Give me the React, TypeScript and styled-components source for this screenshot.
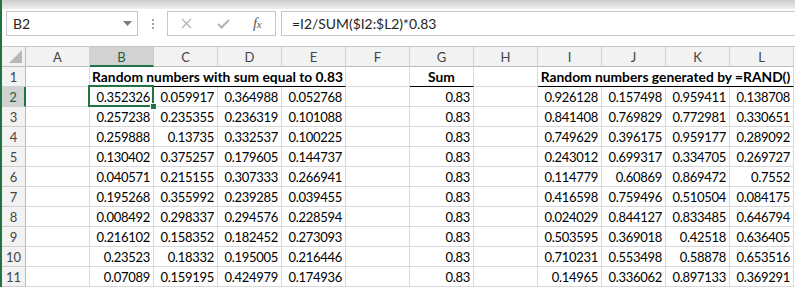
import React from 'react';
import styled, {createGlobalStyle} from 'styled-components';

const GlobalStyle = createGlobalStyle`
  html, body {
    margin: 0;
    padding: 0;
    background: #ffffff;
  }
  body {
    font-family: Lato, "Liberation Sans", sans-serif;
    overflow: hidden;
  }
`;

const GREEN = '#217346';

const Window = styled.div`
  display: flex;
  width: 795px;
  height: 287px;
  overflow: hidden;
  background: #ffffff;
`;
const Edge = styled.div`
  width: 2px;
  flex-shrink: 0;
  background: ${GREEN};
`;
const Main = styled.div`
  flex: 1;
  min-width: 0;
  display: flex;
  flex-direction: column;
`;
const TopShade = styled.div`
  height: 9px;
  background: linear-gradient(#cdcdcd, #efefef);
`;
const FormulaBar = styled.div`
  display: flex;
  align-items: center;
  height: 25px;
  padding: 2px 0 0 4px;
  margin-bottom: 10px;

  > * {
    flex-shrink: 0;
  }
`;
const NameBox = styled.div`
  box-sizing: border-box;
  width: 132px;
  height: 25px;
  border: 1px solid #c6c6c6;
  display: flex;
  align-items: center;
  justify-content: space-between;
  padding: 0 5px 0 6px;
  font-size: 14px;
  color: #262626;
`;
const Dots = styled.div`
  display: flex;
  flex-direction: column;
  gap: 2px;
  margin: 0 13px 0 14px;

  > span {
    width: 2px;
    height: 2px;
    background: #a6a6a6;
  }
`;
const ActionBox = styled.div`
  box-sizing: border-box;
  width: 109px;
  height: 25px;
  border: 1px solid #c6c6c6;
  display: flex;
  align-items: center;
  padding-left: 13px;
`;
const ActionSlot = styled.div<{$w: number}>`
  width: ${p => p.$w}px;
  flex-shrink: 0;
  display: flex;
  align-items: center;
`;
const Fx = styled.span`
  font-family: "Liberation Serif", serif;
  font-style: italic;
  font-size: 15px;
  color: #595959;
  letter-spacing: -0.5px;

  > small {
    font-size: 11px;
  }
`;
const FormulaInput = styled.div`
  flex: 1 0 0;
  box-sizing: border-box;
  height: 25px;
  margin-left: 5px;
  border: 1px solid #c6c6c6;
  border-right: none;
  display: flex;
  align-items: center;
  padding-left: 10px;
  font-size: 13.9px;
  color: #262626;
  white-space: nowrap;
`;

const Sheet = styled.div`
  display: grid;
  grid-template-columns: 24px repeat(12, 64px);
  grid-auto-rows: 20px;
  border-top: 1px solid #c6c6c6;
  font-size: 13px;
  color: #000000;
`;
const Corner = styled.div`
  box-sizing: border-box;
  position: relative;
  background: #f2f2f2;
  border-right: 1px solid #bdbdbd;
  border-bottom: 1px solid #bdbdbd;

  &::after {
    content: '';
    position: absolute;
    right: 3px;
    bottom: 3px;
    border-left: 13px solid transparent;
    border-bottom: 13px solid #b8b8b8;
  }
`;
const ColHead = styled.div<{$active?: boolean}>`
  box-sizing: border-box;
  display: flex;
  align-items: center;
  justify-content: center;
  background: ${p => (p.$active ? '#d2d2d2' : '#f2f2f2')};
  border-right: 1px solid #d0d0d0;
  border-bottom: ${p => (p.$active ? `2px solid ${GREEN}` : '1px solid #bdbdbd')};
  color: ${p => (p.$active ? '#1e5e3a' : '#444444')};
  padding-top: ${p => (p.$active ? '1px' : '0')};
`;
const RowHead = styled.div<{$active?: boolean}>`
  box-sizing: border-box;
  display: flex;
  align-items: center;
  justify-content: center;
  background: ${p => (p.$active ? '#d2d2d2' : '#f2f2f2')};
  border-right: ${p => (p.$active ? `2px solid ${GREEN}` : '1px solid #bdbdbd')};
  border-bottom: 1px solid #d0d0d0;
  color: ${p => (p.$active ? '#1e5e3a' : '#444444')};
`;
const Cell = styled.div<{$selected?: boolean}>`
  box-sizing: border-box;
  position: relative;
  border-right: 1px solid #d9d9d9;
  border-bottom: 1px solid #d9d9d9;
  text-align: right;
  padding: 0 3px 0 0;
  line-height: 20px;
  letter-spacing: -0.3px;
  white-space: nowrap;

  ${p => p.$selected && `
    &::after {
      content: '';
      position: absolute;
      left: -2px;
      top: -2px;
      right: -1px;
      bottom: -1px;
      border: 2px solid ${GREEN};
    }
    &::before {
      content: '';
      position: absolute;
      right: -4px;
      bottom: -4px;
      width: 5px;
      height: 5px;
      background: ${GREEN};
      border: 1px solid #ffffff;
      z-index: 2;
    }
  `}
`;
const TitleCell = styled.div<{$span: number}>`
  grid-column: span ${p => p.$span};
  box-sizing: border-box;
  border-right: 1px solid #d9d9d9;
  border-bottom: 1px solid #000000;
  text-align: center;
  font-size: 13.8px;
  font-weight: 700;
  line-height: 20px;
  white-space: nowrap;
`;

const B = ['0.352326', '0.257238', '0.259888', '0.130402', '0.040571', '0.195268', '0.008492', '0.216102', '0.23523', '0.07089'];
const C = ['0.059917', '0.235355', '0.13735', '0.375257', '0.215155', '0.355992', '0.298337', '0.158352', '0.18332', '0.159195'];
const D = ['0.364988', '0.236319', '0.332537', '0.179605', '0.307333', '0.239285', '0.294576', '0.182452', '0.195005', '0.424979'];
const E = ['0.052768', '0.101088', '0.100225', '0.144737', '0.266941', '0.039455', '0.228594', '0.273093', '0.216446', '0.174936'];
const I = ['0.926128', '0.841408', '0.749629', '0.243012', '0.114779', '0.416598', '0.024029', '0.503595', '0.710231', '0.14965'];
const J = ['0.157498', '0.769829', '0.396175', '0.699317', '0.60869', '0.759496', '0.844127', '0.369018', '0.553498', '0.336062'];
const K = ['0.959411', '0.772981', '0.959177', '0.334705', '0.869472', '0.510504', '0.833485', '0.42518', '0.58878', '0.897133'];
const L = ['0.138708', '0.330651', '0.289092', '0.269727', '0.7552', '0.084175', '0.646794', '0.636405', '0.653516', '0.369291'];

const columns = ['A', 'B', 'C', 'D', 'E', 'F', 'G', 'H', 'I', 'J', 'K', 'L'];

const App: React.FC = () => {
  return (
    <Window>
      <GlobalStyle/>
      <Edge/>
      <Main>
        <TopShade/>
        <FormulaBar>
          <NameBox>
            <span>B2</span>
            <svg width="9" height="5" viewBox="0 0 9 5">
              <path d="M0 0 L9 0 L4.5 5 Z" fill="#7a7a7a"/>
            </svg>
          </NameBox>
          <Dots><span/><span/><span/></Dots>
          <ActionBox>
            <ActionSlot $w={36}>
              <svg width="11" height="11" viewBox="0 0 11 11">
                <path d="M1 1 L10 10 M10 1 L1 10" stroke="#b3b3b3" strokeWidth="1.3" fill="none"/>
              </svg>
            </ActionSlot>
            <ActionSlot $w={36}>
              <svg width="13" height="10" viewBox="0 0 13 10">
                <path d="M1 5 L4.5 8.5 L12 1" stroke="#b3b3b3" strokeWidth="2" fill="none"/>
              </svg>
            </ActionSlot>
            <ActionSlot $w={20}>
              <Fx>f<small>x</small></Fx>
            </ActionSlot>
          </ActionBox>
          <FormulaInput>=I2/SUM($I2:$L2)*0.83</FormulaInput>
        </FormulaBar>

        <Sheet>
          <Corner/>
          {columns.map(c => <ColHead key={c} $active={c === 'B'}>{c}</ColHead>)}

          <RowHead>1</RowHead>
          <Cell/>
          <TitleCell $span={4}>Random numbers with sum equal to 0.83</TitleCell>
          <Cell/>
          <TitleCell $span={1}>Sum</TitleCell>
          <Cell/>
          <TitleCell $span={4}>Random numbers generated by =RAND()</TitleCell>

          {B.map((_, i) => (
            <React.Fragment key={i}>
              <RowHead $active={i === 0}>{i + 2}</RowHead>
              <Cell/>
              <Cell $selected={i === 0}>{B[i]}</Cell>
              <Cell>{C[i]}</Cell>
              <Cell>{D[i]}</Cell>
              <Cell>{E[i]}</Cell>
              <Cell/>
              <Cell>0.83</Cell>
              <Cell/>
              <Cell>{I[i]}</Cell>
              <Cell>{J[i]}</Cell>
              <Cell>{K[i]}</Cell>
              <Cell>{L[i]}</Cell>
            </React.Fragment>
          ))}
        </Sheet>
      </Main>
    </Window>
  );
};
export default App;
